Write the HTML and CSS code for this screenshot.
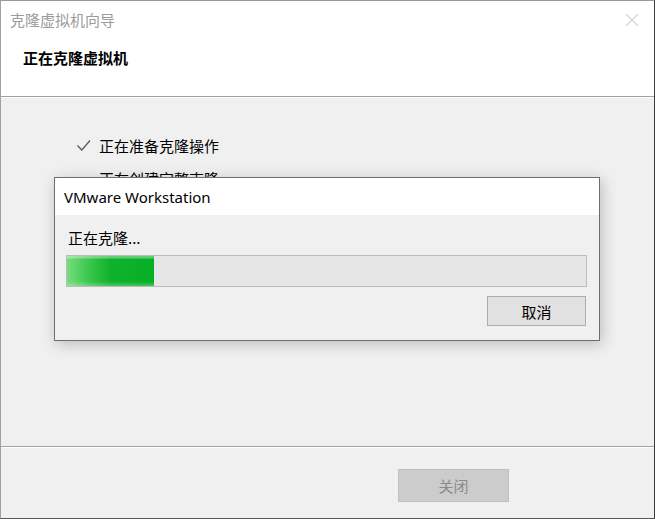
FILE: index.html
```html
<!DOCTYPE html>
<html lang="zh-CN">
<head>
<meta charset="utf-8">
<title>克隆虚拟机向导</title>
<link rel="stylesheet" href="styles.css">
</head>
<body>
<div class="window">
  <div class="header">
    <div class="titlebar">
      <span class="title">克隆虚拟机向导</span>
      <svg class="close" width="14" height="14" viewBox="0 0 14 14"><path d="M1 1 L13 13 M13 1 L1 13" stroke="#d4d4d4" stroke-width="1.1" fill="none"/></svg>
    </div>
    <div class="subtitle">正在克隆虚拟机</div>
  </div>
  <div class="content">
    <div class="step">
      <svg class="check" width="16" height="14" viewBox="0 0 16 14"><path d="M1.5 6.5 L5.8 11 L14 1.5" stroke="#555" stroke-width="1.2" fill="none"/></svg>
      <span>正在准备克隆操作</span>
    </div>
    <div class="step">
      <span class="check-space"></span>
      <span>正在创建完整克隆</span>
    </div>
  </div>
  <div class="footer">
    <button class="btn-close" disabled>关闭</button>
  </div>

  <div class="dialog">
    <div class="dlg-title">VMware Workstation</div>
    <div class="dlg-body">
      <div class="dlg-text">正在克隆...</div>
      <div class="progress"><div class="fill" style="width:87px"></div></div>
      <div class="dlg-actions"><button class="btn">取消</button></div>
    </div>
  </div>
</div>
</body>
</html>
```

FILE: styles.css
```css
* { box-sizing: border-box; }
html, body { margin: 0; padding: 0; background: #fff; }
body {
  font-family: "Noto Sans CJK SC", "Noto Sans", sans-serif;
  font-size: 15px;
  color: #000;
}
.window {
  position: relative;
  width: 655px;
  height: 519px;
  border-left: 1px solid #a0a0a0;
  border-top: 1px solid #9a9a9a;
  border-right: 1px solid #3c3c3c;
  border-bottom: 1px solid #555;
  background: #f0f0f0;
  display: flex;
  flex-direction: column;
}
.header {
  background: #fff;
  height: 96px;
  border-bottom: 1px solid #a0a0a0;
  box-shadow: 0 1px 0 #ffffff;
}
.titlebar {
  height: 37px;
  display: flex;
  align-items: center;
  justify-content: space-between;
  padding: 0 15px 0 9px;
}
.title {
  color: #9b9b9b;
  line-height: 20px;
}
.close { display: block; }
.subtitle {
  font-weight: bold;
  padding-left: 22px;
  line-height: 20px;
  margin-top: 10px;
}
.content {
  flex: 1;
  padding: 39px 0 0 75px;
  display: flex;
  flex-direction: column;
  gap: 13px;
  overflow: hidden;
}
.step {
  display: flex;
  align-items: center;
  gap: 7px;
  line-height: 20px;
}
.check { display: block; }
.check-space { width: 16px; }
.footer {
  height: 72px;
  border-top: 1px solid #a0a0a0;
  box-shadow: inset 0 1px 0 #ffffff;
  display: flex;
  justify-content: flex-end;
  align-items: flex-start;
  padding: 22px 145px 0 0;
}
.btn-close {
  width: 111px;
  height: 33px;
  background: #cccccc;
  border: 1px solid #bfbfbf;
  color: #8a8a8a;
  font-family: inherit;
  font-size: 15px;
  padding: 0;
}
.dialog {
  position: absolute;
  left: 53px;
  top: 176px;
  width: 546px;
  height: 164px;
  border: 1px solid #6e6e6e;
  background: #f0f0f0;
  box-shadow: 2px 3px 14px rgba(0,0,0,0.22);
}
.dlg-title {
  background: #fff;
  height: 37px;
  padding-left: 9px;
  display: flex;
  align-items: center;
  font-family: "Noto Sans", "Open Sans", sans-serif;
  font-size: 15px;
  color: #000;
}
.dlg-body {
  padding: 13px 12px 0 11px;
}
.dlg-text {
  line-height: 20px;
  padding-left: 2px;
}
.progress {
  margin-top: 7px;
  height: 32px;
  border: 1px solid #bcbcbc;
  background: #e6e6e6;
  position: relative;
}
.fill {
  height: 100%;
  background:
    linear-gradient(to bottom, rgba(255,255,255,0.35) 0, rgba(255,255,255,0.35) 2px, rgba(255,255,255,0) 3px, rgba(255,255,255,0) 85%, rgba(255,255,255,0.25) 100%),
    linear-gradient(to right, #74de7c 0%, #3cc64e 25%, #10b22c 50%, #06b025 100%);
}
.dlg-actions {
  display: flex;
  justify-content: flex-end;
  margin-top: 9px;
  padding-right: 1px;
}
.btn {
  width: 99px;
  height: 30px;
  background: #e1e1e1;
  border: 1px solid #adadad;
  font-family: inherit;
  font-size: 15px;
  color: #000;
  padding: 0;
}
```
